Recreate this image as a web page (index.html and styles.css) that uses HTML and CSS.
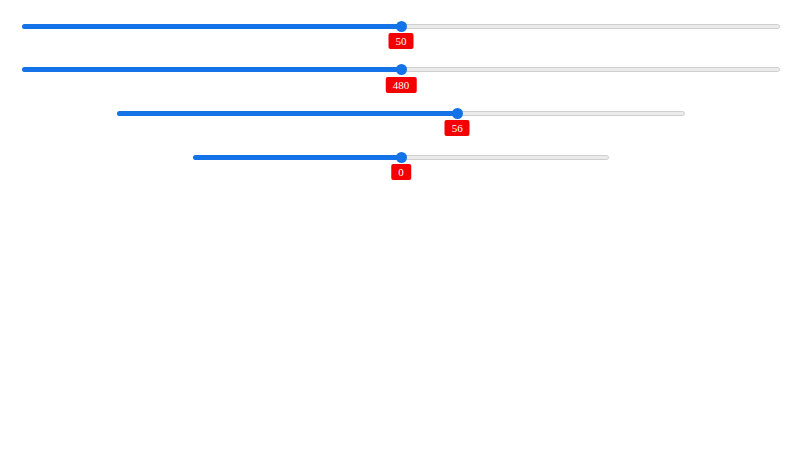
FILE: index.html
```html
<!DOCTYPE html>
<html>
<head>
<meta charset="utf-8">
<link rel="stylesheet" href="styles.css">
</head>
<body>
<div class="sliders">
  <div class="slider s-wide">
    <div class="track"><div class="fill" style="width:50%"></div></div>
    <div class="thumb" style="left:50%"></div>
    <div class="label" style="left:50%">50</div>
  </div>
  <div class="slider s-wide">
    <div class="track"><div class="fill" style="width:50%"></div></div>
    <div class="thumb" style="left:50%"></div>
    <div class="label" style="left:50%">480</div>
  </div>
  <div class="slider s-mid">
    <div class="track"><div class="fill" style="width:59.9%"></div></div>
    <div class="thumb" style="left:59.9%"></div>
    <div class="label" style="left:59.9%">56</div>
  </div>
  <div class="slider s-narrow">
    <div class="track"><div class="fill" style="width:50%"></div></div>
    <div class="thumb" style="left:50%"></div>
    <div class="label" style="left:50%">0</div>
  </div>
</div>
</body>
</html>
```
FILE: styles.css
```css
html, body {
  margin: 0;
  padding: 0;
  background: #ffffff;
}
.sliders {
  padding-left: 2px;
  padding-bottom: 40px;
  display: flex;
  flex-direction: column;
  align-items: center;
}
.slider {
  position: relative;
  height: 43.7px;
  padding-top: 23.5px;
  box-sizing: border-box;
}
.s-wide { width: 758px; }
.s-mid { width: 568px; }
.s-narrow { width: 416px; }
.track {
  position: relative;
  height: 5px;
  background: #ebebeb;
  border: 1px solid #cfcfcf;
  box-sizing: border-box;
  border-radius: 3px;
}
.fill {
  position: absolute;
  left: -1px;
  top: -1px;
  bottom: -1px;
  background: #1473e6;
  border-radius: 3px;
}
.thumb {
  position: absolute;
  top: 20.5px;
  width: 11px;
  height: 11px;
  margin-left: -5.5px;
  border-radius: 50%;
  background: #1473e6;
}
.label {
  position: absolute;
  top: 33px;
  transform: translateX(-50%);
  background: #f50000;
  color: #ffffff;
  font-family: "Liberation Serif", serif;
  font-size: 11px;
  line-height: 16px;
  padding: 0 7px;
  border-radius: 2px;
  white-space: nowrap;
  z-index: 2;
}
```
